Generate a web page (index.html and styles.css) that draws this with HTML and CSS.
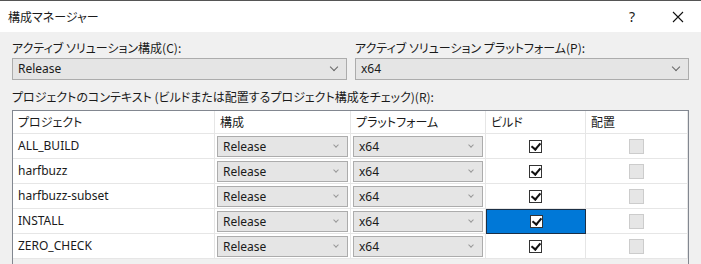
FILE: index.html
```html
<!DOCTYPE html>
<html lang="ja">
<head>
    <meta charset="UTF-8">
    <title>構成マネージャー</title>
    <link rel="stylesheet" href="styles.css">
</head>
<body>
    <div class="dialog">
        <div class="titlebar">
            <span class="title">構成マネージャー</span>
            <span class="help">?</span>
            <span class="close">
                <svg width="12" height="12" viewBox="0 0 12 12"><path d="M1 1 L11 11 M11 1 L1 11" stroke="#111" stroke-width="1.1" fill="none"/></svg>
            </span>
        </div>

        <div class="content">
            <div class="solution-row">
                <div class="field">
                    <label>アクティブ ソリューション構成(C):</label>
                    <div class="combo big">Release<span class="arrow"></span></div>
                </div>
                <div class="field">
                    <label>アクティブ ソリューション プラットフォーム(P):</label>
                    <div class="combo big">x64<span class="arrow"></span></div>
                </div>
            </div>

            <label class="context-label">プロジェクトのコンテキスト (ビルドまたは配置するプロジェクト構成をチェック)(R):</label>

            <div class="project-grid">
                <div class="head">プロジェクト</div>
                <div class="head">構成</div>
                <div class="head">プラットフォーム</div>
                <div class="head">ビルド</div>
                <div class="head">配置</div>

                <div class="cell name">ALL_BUILD</div>
                <div class="cell"><div class="combo small">Release<span class="arrow"></span></div></div>
                <div class="cell"><div class="combo small">x64<span class="arrow"></span></div></div>
                <div class="cell center"><span class="check on"></span></div>
                <div class="cell center"><span class="check off"></span></div>

                <div class="cell name">harfbuzz</div>
                <div class="cell"><div class="combo small">Release<span class="arrow"></span></div></div>
                <div class="cell"><div class="combo small">x64<span class="arrow"></span></div></div>
                <div class="cell center"><span class="check on"></span></div>
                <div class="cell center"><span class="check off"></span></div>

                <div class="cell name">harfbuzz-subset</div>
                <div class="cell"><div class="combo small">Release<span class="arrow"></span></div></div>
                <div class="cell"><div class="combo small">x64<span class="arrow"></span></div></div>
                <div class="cell center"><span class="check on"></span></div>
                <div class="cell center"><span class="check off"></span></div>

                <div class="cell name">INSTALL</div>
                <div class="cell"><div class="combo small">Release<span class="arrow"></span></div></div>
                <div class="cell"><div class="combo small">x64<span class="arrow"></span></div></div>
                <div class="cell center selected"><span class="check on"></span></div>
                <div class="cell center"><span class="check off"></span></div>

                <div class="cell name">ZERO_CHECK</div>
                <div class="cell"><div class="combo small">Release<span class="arrow"></span></div></div>
                <div class="cell"><div class="combo small">x64<span class="arrow"></span></div></div>
                <div class="cell center"><span class="check on"></span></div>
                <div class="cell center"><span class="check off"></span></div>
            </div>
        </div>
    </div>
</body>
</html>
```

FILE: styles.css
```css
body {
    margin: 0;
    padding: 0;
    font-family: "Segoe UI", "Noto Sans", "Noto Sans CJK JP", sans-serif;
    font-size: 12px;
    color: #1a1a1a;
    background-color: #f0f0f0;
    overflow: hidden;
}

.dialog {
    width: 701px;
    height: 264px;
    display: flex;
    flex-direction: column;
}

label, .title, .head {
    font-family: "Noto Sans CJK JP", sans-serif;
    font-feature-settings: "palt";
}

.titlebar {
    height: 32px;
    background-color: #ffffff;
    display: flex;
    align-items: center;
    padding-left: 8px;
    border-top: 1px solid #555;
    box-sizing: border-box;
}

.title {
    flex: 1;
    font-size: 12px;
}

.help {
    width: 46px;
    text-align: center;
    font-size: 14px;
}

.close {
    width: 46px;
    display: flex;
    justify-content: center;
}

.content {
    flex: 1;
    padding: 6px 12px 0 12px;
    display: flex;
    flex-direction: column;
}

.solution-row {
    display: grid;
    grid-template-columns: 335px 334px;
    column-gap: 8px;
}

.field label {
    display: block;
    height: 20px;
    line-height: 20px;
}

.combo {
    position: relative;
    box-sizing: border-box;
    background-color: #e5e5e5;
    border: 1px solid #acacac;
}

.combo.big {
    height: 22px;
    line-height: 20px;
    padding-left: 5px;
}

.combo.small {
    height: 21px;
    line-height: 19px;
    padding-left: 5px;
    margin: 2px 2px 0 2px;
}

.arrow {
    position: absolute;
    right: 9px;
    top: 50%;
    width: 5px;
    height: 5px;
    margin-top: -5px;
    border-right: 1px solid #666;
    border-bottom: 1px solid #666;
    transform: rotate(45deg);
}

.combo.small .arrow {
    width: 3px;
    height: 3px;
    margin-top: -4px;
    border-color: #999;
}

.context-label {
    display: block;
    height: 18px;
    line-height: 18px;
    margin-top: 8px;
    margin-bottom: 4px;
}

.project-grid {
    display: grid;
    grid-template-columns: 202px 136px 135px 100px 102px;
    grid-auto-rows: 25px;
    grid-template-rows: 23px;
    border: 1px solid #828790;
    border-bottom: none;
    background-color: #f0f0f0;
    width: 675px;
    flex: 1;
    align-content: start;
}

.head, .cell {
    background-color: #ffffff;
    border-right: 1px solid #e6e6e6;
    border-bottom: 1px solid #e6e6e6;
    box-sizing: border-box;
}

.head {
    line-height: 22px;
    padding-left: 5px;
}

.cell.name {
    line-height: 24px;
    padding-left: 5px;
}

.cell.center {
    display: flex;
    align-items: center;
    justify-content: center;
}

.cell.selected {
    background-color: #0078d7;
    border: 1px solid #1c2f45;
}

.check {
    width: 13px;
    height: 13px;
    box-sizing: border-box;
    display: block;
    position: relative;
}

.check.on {
    background-color: #ffffff;
    border: 1px solid #333;
}

.check.on::after {
    content: "";
    position: absolute;
    left: 3px;
    top: 0px;
    width: 4px;
    height: 7px;
    border-right: 2px solid #111;
    border-bottom: 2px solid #111;
    transform: rotate(40deg);
}

.check.off {
    background-color: #e6e6e6;
    border: 1px solid #cccccc;
    width: 15px;
    height: 15px;
}
```
